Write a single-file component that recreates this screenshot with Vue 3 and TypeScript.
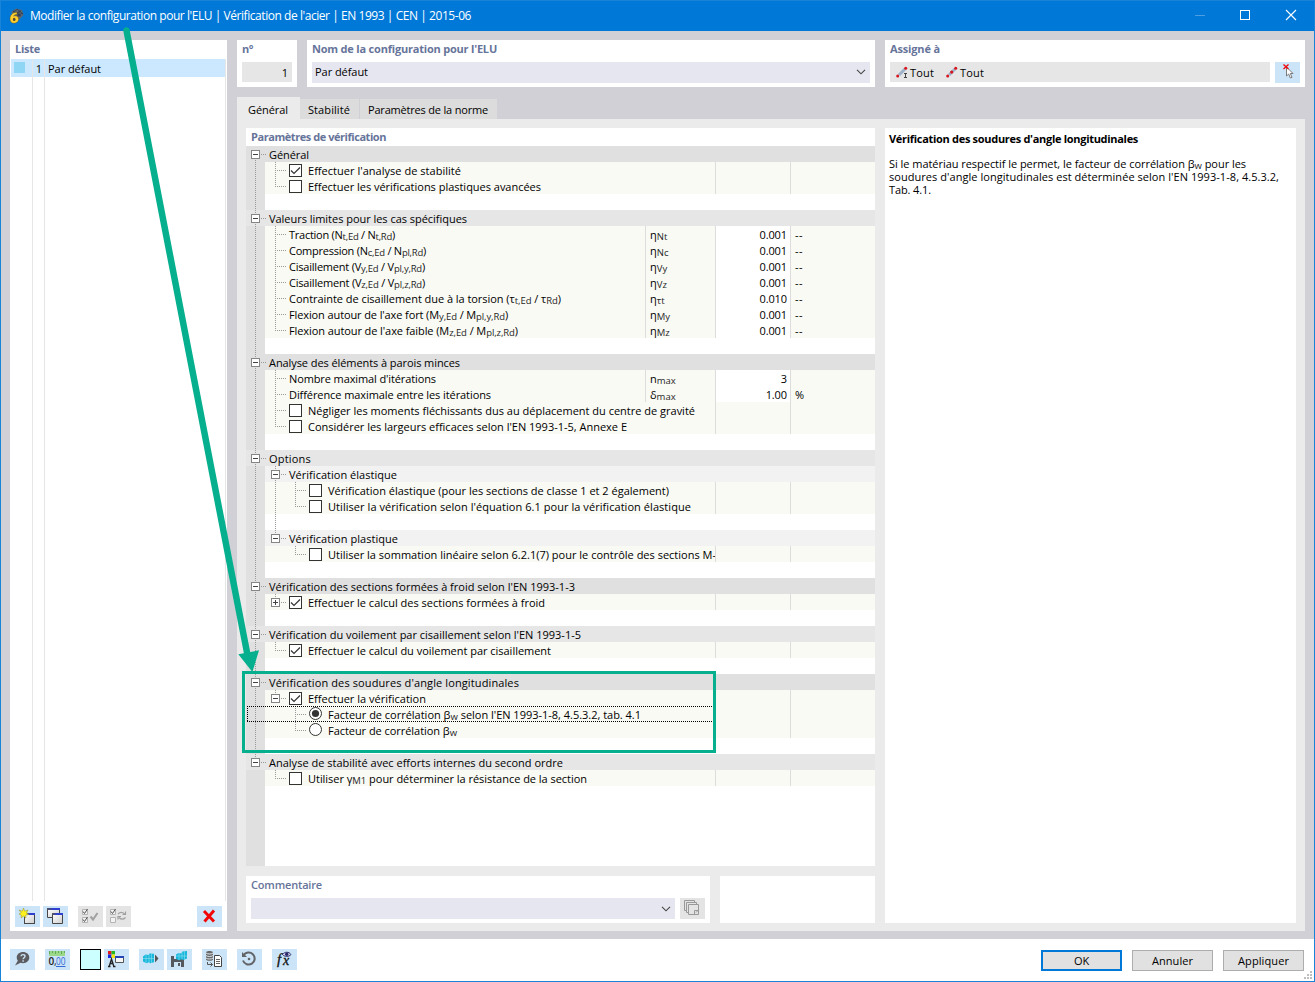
<script setup lang="ts">
import type { Directive } from 'vue'

type Seg = { t: string; sub: boolean }
type Kind = 'head' | 'subhead' | 'item' | 'blank'
interface Row {
  kind: Kind
  text?: string
  w?: number
  alt?: boolean
  /** connector drawn at the first and second nesting level */
  c1?: string
  c2?: string
  check?: boolean
  radio?: boolean
  sym?: string
  val?: string
  unit?: string
  focus?: boolean
}

/* Spreads letters so that a label takes the given width in pixels. */
const fit = (el: HTMLElement, width?: number) => {
  if (!width) return
  el.style.letterSpacing = '0px'
  const n = (el.textContent ?? '').length
  if (n > 1) el.style.letterSpacing = `${(width - el.getBoundingClientRect().width) / n}px`
}
const vFit: Directive<HTMLElement, number | undefined> = {
  mounted: (el, b) => fit(el, b.value),
}

const parse = (s = ''): Seg[] =>
  s.split(/(_\{[^}]*\})/).filter(Boolean).map((p) =>
    p.startsWith('_{') ? { t: p.slice(2, -1), sub: true } : { t: p, sub: false })

const rows: Row[] = [
  { kind: 'head', text: 'Général', w: 40 },
  { kind: 'item', c1: 't', check: true, text: "Effectuer l'analyse de stabilité", w: 153 },
  { kind: 'item', c1: 'l', check: false, text: 'Effectuer les vérifications plastiques avancées', w: 233 },
  { kind: 'blank' },
  { kind: 'head', alt: true, text: 'Valeurs limites pour les cas spécifiques', w: 198 },
  { kind: 'item', c1: 't', text: 'Traction (N_{t,Ed} / N_{t,Rd})', w: 106, sym: 'η_{Nt}', val: '0.001', unit: '--' },
  { kind: 'item', c1: 't', text: 'Compression (N_{c,Ed} / N_{pl,Rd})', w: 137, sym: 'η_{Nc}', val: '0.001', unit: '--' },
  { kind: 'item', c1: 't', text: 'Cisaillement (V_{y,Ed} / V_{pl,y,Rd})', w: 136, sym: 'η_{Vy}', val: '0.001', unit: '--' },
  { kind: 'item', c1: 't', text: 'Cisaillement (V_{z,Ed} / V_{pl,z,Rd})', w: 136, sym: 'η_{Vz}', val: '0.001', unit: '--' },
  { kind: 'item', c1: 't', text: 'Contrainte de cisaillement due à la torsion (τ_{t,Ed} / τ_{Rd})', w: 272, sym: 'η_{τt}', val: '0.010', unit: '--' },
  { kind: 'item', c1: 't', text: "Flexion autour de l'axe fort (M_{y,Ed} / M_{pl,y,Rd})", w: 219, sym: 'η_{My}', val: '0.001', unit: '--' },
  { kind: 'item', c1: 'l', text: "Flexion autour de l'axe faible (M_{z,Ed} / M_{pl,z,Rd})", w: 229, sym: 'η_{Mz}', val: '0.001', unit: '--' },
  { kind: 'blank' },
  { kind: 'head', text: 'Analyse des éléments à parois minces', w: 191 },
  { kind: 'item', c1: 't', text: "Nombre maximal d'itérations", w: 147, sym: 'n_{max}', val: '3', unit: '' },
  { kind: 'item', c1: 't', text: 'Différence maximale entre les itérations', w: 202, sym: 'δ_{max}', val: '1.00', unit: '%' },
  { kind: 'item', c1: 't', check: false, text: 'Négliger les moments fléchissants dus au déplacement du centre de gravité', w: 387 },
  { kind: 'item', c1: 'l', check: false, text: "Considérer les largeurs efficaces selon l'EN 1993-1-5, Annexe E", w: 319 },
  { kind: 'blank' },
  { kind: 'head', alt: true, text: 'Options', w: 42 },
  { kind: 'subhead', c1: 'm', text: 'Vérification élastique', w: 108 },
  { kind: 'item', c1: 'i', c2: 't', check: false, text: 'Vérification élastique (pour les sections de classe 1 et 2 également)', w: 341 },
  { kind: 'item', c1: 'i', c2: 'l', check: false, text: "Utiliser la vérification selon l'équation 6.1 pour la vérification élastique", w: 363 },
  { kind: 'blank', c1: 'i' },
  { kind: 'subhead', c1: 'e', text: 'Vérification plastique', w: 109 },
  { kind: 'item', c2: 'l', check: false, text: 'Utiliser la sommation linéaire selon 6.2.1(7) pour le contrôle des sections M-', w: 388 },
  { kind: 'blank' },
  { kind: 'head', text: "Vérification des sections formées à froid selon l'EN 1993-1-3", w: 306 },
  { kind: 'item', c1: 'p', check: true, text: 'Effectuer le calcul des sections formées à froid', w: 237 },
  { kind: 'blank' },
  { kind: 'head', alt: true, text: "Vérification du voilement par cisaillement selon l'EN 1993-1-5", w: 312 },
  { kind: 'item', c1: 'l', check: true, text: 'Effectuer le calcul du voilement par cisaillement', w: 243 },
  { kind: 'blank' },
  { kind: 'head', text: "Vérification des soudures d'angle longitudinales", w: 250 },
  { kind: 'item', c1: 'e', check: true, text: 'Effectuer la vérification', w: 118 },
  { kind: 'item', c2: 't', radio: true, focus: true, text: "Facteur de corrélation β_{w} selon l'EN 1993-1-8, 4.5.3.2, tab. 4.1", w: 313 },
  { kind: 'item', c2: 'l', radio: false, text: 'Facteur de corrélation β_{w}', w: 129 },
  { kind: 'blank' },
  { kind: 'head', alt: true, text: 'Analyse de stabilité avec efforts internes du second ordre', w: 294 },
  { kind: 'item', c1: 'l', check: false, text: 'Utiliser γ_{M1} pour déterminer la résistance de la section', w: 279 },
]
const lastHead = rows.map((r) => r.kind).lastIndexOf('head')

/* Vertical and horizontal dotted strokes of the tree for one row. */
const lines = (r: Row, i: number): string => {
  let d = ''
  if (i === 0) d += 'M9.5 14V16'
  else if (i < lastHead) d += r.kind === 'head' ? 'M9.5 0V4M9.5 14V16' : 'M9.5 0V16'
  else if (i === lastHead) d += 'M9.5 0V4'
  if (r.kind === 'head') d += 'M15 8.5H20'
  const level = (c: string | undefined, x: number) => {
    if (!c) return
    if (c === 't' || c === 'i') d += `M${x} 0V16`
    if (c === 'l') d += `M${x} 0V8`
    if (c === 't' || c === 'l') d += `M${x - 0.5} 8.5H${x + 11}`
    if (c === 'm' || c === 'e' || c === 'p') d += `M${x} 0V4M${x + 5.5} 8.5H${x + 11}`
    if (c === 'm') d += `M${x} 14V16`
  }
  level(r.c1, 29.5)
  level(r.c2, 49.5)
  return d
}
const boxX = (r: Row): number | null =>
  r.kind === 'head' ? 5 : r.c1 && 'mep'.includes(r.c1) ? 25 : null
const hasMark = (r: Row) => r.check !== undefined || r.radio !== undefined
const labelClass = (r: Row) => {
  if (r.kind === 'head') return 'at0'
  if (hasMark(r)) return r.c2 ? 'at3' : 'at2'
  return 'at1'
}
</script>

<template>
  <div class="window">
    <header class="titlebar">
      <svg class="logo" width="16" height="16" viewBox="0 0 16 16">
        <path d="M3 4 8 0.5 14 2 15.5 7 11 12 7 8Z" fill="#5b6774" />
        <path d="M5 4 9 1.5M7 6 13 2.5M9 8 15 5M5 3 13 8M9 1 15 6M11 9V4" stroke="#25303c" stroke-width=".6" />
        <path d="M9 4.200C4.800 4.200 2 7 2 10.900c0 2.700 1.600 4.300 4.200 4.300s4.400-1.600 4.400-3.900c0-2.200-1.400-3.500-3.600-3.500-.5 0-1 .1-1.500.4.700-1.200 1.900-1.800 3.500-1.800Z" fill="#ffd02c" stroke="#604a12" stroke-width=".4" />
        <ellipse cx="6.200" cy="11.400" rx="1.300" ry="1.600" fill="#514a38" />
      </svg>
      <span v-fit="441" class="caption">Modifier la configuration pour l'ELU | Vérification de l'acier | EN 1993 | CEN | 2015-06</span>
      <svg class="winbtns" width="138" height="30" viewBox="0 0 138 30" fill="none">
        <path d="M18 14.500h10" stroke="#4d9fe2" />
        <rect x="63.500" y="9.500" width="9" height="9" stroke="#fff" />
        <path d="m109 9 10 10m0-10-10 10" stroke="#fff" stroke-width="1.100" />
      </svg>
    </header>

    <main class="body">
      <section class="list">
        <h2><span v-fit="25">Liste</span></h2>
        <div class="listrows">
          <div class="listrow">
            <span class="c-color"><i /></span>
            <span class="c-num">1</span>
            <span class="c-name"><span v-fit="53">Par défaut</span></span>
          </div>
          <div class="listfill"><span class="c-color" /><span class="c-num" /><span class="c-name" /></div>
        </div>
        <div class="listtools">
          <button class="tool">
            <svg width="25" height="21" viewBox="0 0 25 21">
              <defs>
                <linearGradient id="bar"><stop offset="0" stop-color="#555" /><stop offset=".5" stop-color="#2f3fd0" /><stop offset="1" stop-color="#2f3fd0" /></linearGradient>
                <linearGradient id="pane" x2="1" y2="1"><stop offset="0" stop-color="#fff" /><stop offset="1" stop-color="#cfcfcf" /></linearGradient>
              </defs>
              <rect x="9.500" y="7.500" width="10" height="10" fill="url(#pane)" stroke="#474747" />
              <path d="M9 7h11v2H9z" fill="url(#bar)" />
              <path d="m8.500 2 1.200 3.200L13 4l-1.500 3 2.500 1.500-3.300.6.300 3-2.500-2L6 12l.3-3L4 8l2.200-1.300L4 4l3.300 1.200Z" fill="#fff21c" stroke="#8b8c32" stroke-width=".5" />
            </svg>
          </button>
          <button class="tool g3">
            <svg width="25" height="21" viewBox="0 0 25 21">
              <path d="M4.500 2.500h12v9h-12z" fill="url(#pane)" stroke="#474747" /><path d="M4 2h13v2H4z" fill="url(#bar)" />
              <path d="M9.500 7.500h10v10h-10z" fill="url(#pane)" stroke="#474747" /><path d="M9 7h11v2H9z" fill="url(#bar)" />
            </svg>
          </button>
          <button class="tool off g10">
            <svg width="25" height="21" viewBox="0 0 25 21" fill="none">
              <path d="M4.500 3.500h5v5h-5zM4.500 11.500h5v5h-5z" stroke="#b4b4b4" fill="#f2f2f2" />
              <path d="m5 5.500 1.500 2 3-4.500M5 13.500l1.500 2 3-4.500" stroke="#555" />
              <path d="m12.500 10.500 2.500 3 4.500-6.500" stroke="#a0a0a0" stroke-width="2" />
            </svg>
          </button>
          <button class="tool off g3">
            <svg width="25" height="21" viewBox="0 0 25 21" fill="none">
              <path d="M4.500 3.500h5v5h-5zM4.500 11.500h5v5h-5z" stroke="#b4b4b4" fill="#f2f2f2" />
              <path d="m5 5.500 1.500 2 3-4.500" stroke="#555" />
              <path d="M12 8c2-2 4.500-2 6.500 0M19.500 5.500v3h-3M19.500 11.500c-2 2-4.500 2-6.500 0M12 13.500v-3h3" stroke="#a0a0a0" stroke-width="1.200" />
            </svg>
          </button>
          <button class="tool del">
            <svg width="25" height="21" viewBox="0 0 25 21" fill="none">
              <path d="m7 5 10 10.500M17 4.500 7.500 15.500" stroke="#f20505" stroke-width="2.900" />
            </svg>
          </button>
        </div>
      </section>

      <div class="right">
        <div class="top">
          <section class="card num"><h2><span v-fit="11">n°</span></h2><div class="field gray end">1</div></section>
          <section class="card name">
            <h2><span v-fit="185">Nom de la configuration pour l'ELU</span></h2>
            <div class="field combo"><span v-fit="53">Par défaut</span>
              <svg width="10" height="6" viewBox="0 0 10 6" fill="none"><path d="m1 .8 4 4 4-4" stroke="#444" stroke-width="1.100" /></svg>
            </div>
          </section>
          <section class="card assign">
            <h2><span v-fit="50">Assigné à</span></h2>
            <div class="line">
              <div class="field gray members">
                <svg width="14" height="14" viewBox="0 0 14 14">
                  <path d="M3 9 9 3" stroke="#9fb3cb" stroke-width="3" /><circle cx="1.700" cy="10" r="1.500" fill="#d8141c" /><circle cx="9.700" cy="2.200" r="1.500" fill="#d8141c" />
                  <path d="M8 7.500h3M9.500 7.500v4M8 11.500h3" stroke="#444" />
                </svg>
                <span v-fit="24">Tout</span>
                <svg class="set" width="14" height="14" viewBox="0 0 14 14">
                  <path d="M3 9 9 3" stroke="#9fb3cb" stroke-width="3" /><circle cx="1.700" cy="10" r="1.500" fill="#d8141c" /><circle cx="5.700" cy="6.100" r="1.600" fill="#d8141c" /><circle cx="9.700" cy="2.200" r="1.500" fill="#d8141c" />
                </svg>
                <span v-fit="24">Tout</span>
              </div>
              <button class="tool">
                <svg width="25" height="21" viewBox="0 0 25 21">
                  <path d="M11.500 5v9l2.200-2 1.600 4 1.700-.7-1.700-3.800H18Z" fill="#fff" stroke="#7b7b7b" />
                  <path d="m8.500 2.500 5 4.500m0-4.500-5 4.500" stroke="#f20505" stroke-width="1.300" />
                </svg>
              </button>
            </div>
          </section>
        </div>

        <nav class="tabs">
          <span class="tab on"><span v-fit="40">Général</span></span>
          <span class="tab t2"><span v-fit="42">Stabilité</span></span>
          <span class="tab t3"><span v-fit="120">Paramètres de la norme</span></span>
        </nav>

        <div class="content">
          <div class="left">
            <section class="params">
              <h2><span v-fit="135">Paramètres de vérification</span></h2>
              <div class="tree">
                <div v-for="(r, i) in rows" :key="i" class="row" :class="[r.kind, { alt: r.alt }]">
                  <div class="cell main">
                    <svg class="lines" width="78" height="16" viewBox="0 0 78 16" fill="none">
                      <path :d="lines(r, i)" stroke="#9a9a9a" stroke-dasharray="1 1" />
                      <g v-if="boxX(r) !== null" :transform="`translate(${boxX(r)} 4)`">
                        <rect x=".5" y=".5" width="8" height="8" fill="#fff" stroke="#858585" />
                        <path :d="r.c1 === 'p' ? 'M2 4.500h5M4.500 2v5' : 'M2 4.500h5'" stroke="#444" />
                      </g>
                      <g v-if="hasMark(r)" :transform="`translate(${r.c2 ? 63 : 43} ${r.radio === undefined ? 2 : 1})`">
                        <template v-if="r.radio !== undefined">
                          <circle cx="6.500" cy="6.500" r="6" fill="#fff" stroke="#333" />
                          <circle v-if="r.radio" cx="6.500" cy="6.500" r="3.600" fill="#333" />
                        </template>
                        <template v-else>
                          <rect x=".5" y=".5" width="12" height="12" fill="#fff" stroke="#333" />
                          <path v-if="r.check" d="m2 6.500 3 3 6-6" stroke="#333" stroke-width="1.200" />
                        </template>
                      </g>
                    </svg>
                    <span v-if="r.text" v-fit="r.w" class="label" :class="labelClass(r)"><template v-for="(s, k) in parse(r.text)" :key="k"><sub v-if="s.sub">{{ s.t }}</sub><template v-else>{{ s.t }}</template></template></span>
                  </div>
                  <template v-if="r.kind === 'item'">
                    <div v-if="r.sym" class="cell sym"><span><template v-for="(s, k) in parse(r.sym)" :key="k"><sub v-if="s.sub">{{ s.t }}</sub><template v-else>{{ s.t }}</template></template></span></div>
                    <div class="cell val" :class="{ edit: r.sym }">{{ r.val }}</div>
                    <div class="cell unit">{{ r.unit }}</div>
                  </template>
                  <svg v-if="r.focus" class="focus" width="468" height="16" viewBox="0 0 468 16" fill="none">
                    <path d="M0 .5H468M0 15.500H468M.5 0V16M467.500 0V16" stroke="#000" stroke-dasharray="1 1" />
                  </svg>
                </div>
                <div class="gutter" />
              </div>
            </section>
            <div class="bottom">
              <section class="comment">
                <h2><span v-fit="71">Commentaire</span></h2>
                <div class="line">
                  <div class="field combo">
                    <span />
                    <svg width="10" height="6" viewBox="0 0 10 6" fill="none"><path d="m1 .8 4 4 4-4" stroke="#444" stroke-width="1.100" /></svg>
                  </div>
                  <button class="tool off">
                    <svg width="25" height="21" viewBox="0 0 25 21" fill="none" stroke="#999">
                      <path d="M6.500 12.500h-2v-10h10v2M8.500 14.500h-2v-10h10v2M8.500 6.500h10v10h-10zM14.500 16v-3.500H18M16 14.500l1.500-1.500" />
                    </svg>
                  </button>
                </div>
              </section>
              <section class="empty" />
            </div>
          </div>
          <aside class="help">
            <h3><span v-fit="249">Vérification des soudures d'angle longitudinales</span></h3>
            <p>
              <span v-fit="357">Si le matériau respectif le permet, le facteur de corrélation β<sub>w</sub> pour les</span><br>
              <span v-fit="390">soudures d'angle longitudinales est déterminée selon l'EN 1993-1-8, 4.5.3.2,</span><br>
              <span v-fit="42">Tab. 4.1.</span>
            </p>
          </aside>
        </div>
      </div>
    </main>

    <footer class="footer">
      <button class="tool">
        <svg width="25" height="21" viewBox="0 0 25 21">
          <path d="M13 3c3.600 0 6.300 2.400 6.300 5.600s-2.700 5.600-6.300 5.600c-.9 0-1.700-.1-2.400-.4L5 16.500l2.800-4.700C7.100 10.900 6.700 9.800 6.700 8.600 6.700 5.400 9.400 3 13 3Z" fill="#5c5c60" />
          <path d="M11 7.300c.2-2.300 4-2.200 4 0 0 1.400-1.900 1.400-1.900 3M13.100 11.300v1.400" stroke="#cce4f7" stroke-width="1.400" fill="none" />
        </svg>
      </button>
      <button class="tool g10">
        <svg width="25" height="21" viewBox="0 0 25 21">
          <rect x="4" y="2" width="16" height="5" fill="#9bd88a" /><path d="M4.500 2v3M7.500 2v2M10.500 2v3M13.500 2v2M16.500 2v3M19.500 2v2" stroke="#62ac58" />
          <text x="3.500" y="15.500" font-size="10" font-weight="600" fill="#222">0</text><text x="9" y="15.500" font-size="10" fill="#222">,</text><text x="11" y="15.500" font-size="10" fill="#3569d4" textLength="9.500" lengthAdjust="spacingAndGlyphs">00</text>
          <path d="M11 17.500h9.500" stroke="#3569d4" />
        </svg>
      </button>
      <button class="swatch g10" />
      <button class="tool g3">
        <svg width="25" height="21" viewBox="0 0 25 21">
          <path d="M4 2h3.500v3.500H4z" fill="#e01818" /><path d="M7.500 2H11v3.500H7.500z" fill="#22b622" /><path d="M4 5.500h3.500V9H4z" fill="#1727e0" /><path d="M7.500 5.500H11V9H7.500z" fill="#f2e30e" />
          <path d="m5 18 2.500-8 2.500 8M6 14.500h3.500M4 17.500h2.500M9 17.500h2.500" stroke="#222" stroke-width="1.300" fill="none" />
          <path d="M11.500 7.500h8v6h-8z" fill="#f5f5f5" stroke="#555" /><path d="M11 7h9v2h-9z" fill="#2444b8" />
        </svg>
      </button>
      <button class="tool g10">
        <svg width="25" height="21" viewBox="0 0 25 21">
          <path d="m4 7.500 2.500-2 3 .5 1-1.500 4.500.3v8.500l-4 1-1-1-2.500 1L4 12.500Z" fill="#18b8dc" /><path d="M4 9.500h11M7 6v8M10 5v9M12.500 5v9" stroke="#a5e4f2" stroke-width=".5" />
          <path d="m16 5.500 3.500 4-3.500 4Z" fill="#555" />
        </svg>
      </button>
      <button class="tool g3">
        <svg width="25" height="21" viewBox="0 0 25 21">
          <path d="M4 7h12l1 2v9H4z" fill="#55595d" /><path d="M7 13h7v5H7zM7 7h6v3H7z" fill="#cce4f7" /><path d="M11 14h2v3h-2z" fill="#55595d" />
          <path d="m9 5.500 2.500-1.500 2.500.5L15.500 2.500 20 2v7.500L16.500 11l-2-.7-2.500 1L9 10Z" fill="#18b8dc" /><path d="M9 7h11M12 4v7M15 3v7.500M17.500 2.500v8" stroke="#a5e4f2" stroke-width=".5" />
        </svg>
      </button>
      <button class="tool g10">
        <svg width="25" height="21" viewBox="0 0 25 21" fill="none">
          <path d="M4 3.500c0-2 7-2 7 0v7c0 1.700-7 1.700-7 0Z" fill="#686868" /><path d="M4 4c1 1.300 6 1.300 7 0M4 6.500C5 7.800 10 7.800 11 6.500M4 9c1 1.300 6 1.300 7 0" stroke="#e4edf4" />
          <path d="M5.500 13v2.500h5m-2-2 2 2-2 2" stroke="#555" />
          <path d="M12.500 6.500h5l2 2v9h-7z" fill="#fff" stroke="#444" /><path d="M14 10.500h4M14 12.500h4M14 14.500h4" stroke="#666" />
        </svg>
      </button>
      <button class="tool g10">
        <svg width="25" height="21" viewBox="0 0 25 21" fill="none">
          <path d="M6.500 6.500A6 6 0 1 1 6 11.500" stroke="#626468" stroke-width="2" /><path d="M5 3v5h5Z" fill="#626468" /><circle cx="12" cy="10" r="1.300" fill="#626468" />
        </svg>
      </button>
      <button class="tool g10">
        <svg width="25" height="21" viewBox="0 0 25 21" fill="none">
          <text class="fx" x="5" y="15" font-size="15">f</text><text class="fx" x="11" y="16" font-size="14">x</text>
          <path d="M10.500 5.500c2-3 6.500-3 8.500 0-2 2.500-6.500 2.500-8.500 0Z" fill="#d9dcf4" stroke="#292767" /><circle cx="14.700" cy="5.300" r="1.700" fill="#292767" />
        </svg>
      </button>
      <div class="actions">
        <button class="btn ok"><span v-fit="15">OK</span></button>
        <button class="btn"><span v-fit="41">Annuler</span></button>
        <button class="btn"><span v-fit="51">Appliquer</span></button>
      </div>
      <svg class="grip" width="8" height="8" viewBox="0 0 8 8" fill="#bfbfbf"><path d="M6 0h2v2H6zM3 3h2v2H3zM6 3h2v2H6zM0 6h2v2H0zM3 6h2v2H3zM6 6h2v2H6z" /></svg>
    </footer>

    <svg class="callout" width="1315" height="982" viewBox="0 0 1315 982" fill="none">
      <path d="M126.500 30.500 247.500 655" stroke="#06b08f" stroke-width="6.500" stroke-linecap="round" />
      <path d="m238.300 654.300 20.700-4L252.400 672Z" fill="#06b08f" />
      <rect x="243.500" y="672.500" width="471" height="79" stroke="#06b08f" stroke-width="3" />
    </svg>
  </div>
</template>

<style>
html, body { margin: 0; overflow: hidden; background: #fff; }
</style>

<style scoped>
* { box-sizing: border-box; }
.window {
  position: relative; display: flex; flex-direction: column; width: 1315px; height: 982px;
  border: 1px solid #1883d7; background: #fff; color: #000;
  font: 11px/16px "Open Sans", "Noto Sans", sans-serif; white-space: nowrap; overflow: hidden;
}
button { padding: 0; border: 0; font: inherit; color: inherit; }
svg { display: block; flex: none; }
h2 { margin: 0; font-size: 11px; line-height: 18px; font-weight: 700; color: #66749a; padding-left: 5px; height: 18px; }
sub { font-size: 9.5px; vertical-align: -1px; line-height: 0; color: #262626; }

.titlebar { display: flex; align-items: center; height: 30px; flex: none; background: #0078d7; color: #fff; font-size: 12px; }
.logo { margin-left: 7px; }
.caption { margin-left: 6px; }
.winbtns { margin-left: auto; margin-right: -1px; }

.body { display: flex; gap: 10px; height: 908px; flex: none; padding: 9px 9px 8px; background: #d0d0d6; }
.list { width: 217px; display: flex; flex-direction: column; background: #fff; }
.list h2 { height: 19px; }
.listrows { flex: 1; display: flex; flex-direction: column; margin: 0 1px; border-right: 1px solid #e6e6e6; }
.listrow, .listfill { display: flex; }
.listrow { height: 18px; line-height: 19px; background: #cce8ff; }
.listfill { flex: 1; }
.c-color { width: 22px; border-right: 1px solid #e6e6e6; padding: 3px; }
.c-color i { display: block; width: 11px; height: 11px; background: #8fd6f5; }
.c-num { width: 12px; border-right: 1px solid #e6e6e6; text-align: right; padding-right: 2px; }
.c-name { padding-left: 3px; }
.listtools { display: flex; height: 30px; flex: none; padding: 5px 5px 0; }
.tool { width: 25px; height: 21px; flex: none; background: #cce4f7; }
.off { background: #e4e4e4; }
.g3 { margin-left: 3px; }
.g10 { margin-left: 10px; }
.del { margin-left: auto; }

.right { width: 1068px; display: flex; flex-direction: column; }
.top { display: flex; gap: 10px; height: 47px; flex: none; }
.card { background: #fff; }
.card h2 { height: 22px; }
.num { width: 60px; }
.num .field { margin: 0 5px; }
.name { width: 568px; }
.name .field { margin: 0 5px; padding: 0 4px 1px 3px; }
.assign { width: 420px; }
.line { display: flex; gap: 5px; padding: 0 5px; }
.line .field { flex: 1; }
.field { height: 21px; display: flex; align-items: center; padding: 0 4px; background: #e6e6f1; }
.gray { background: #e6e6e6; height: 20px; padding-top: 2px; }
.end { justify-content: flex-end; }
.combo { justify-content: space-between; }
.members { padding-left: 6px; }
.set { margin-left: 12px; }

.tabs { display: flex; align-items: flex-end; height: 33px; flex: none; margin-bottom: -1px; }
.tab { height: 21px; line-height: 22px; background: #dcdcdc; padding-left: 8px; }
.on { width: 63px; height: 23px; line-height: 26px; background: #ebebeb; padding-left: 11px; }
.t2 { width: 60px; border-right: 1px solid #d0d0d4; }
.t3 { width: 137px; }
.content { flex: 1; display: flex; gap: 10px; padding: 9px 9px 8px; background: #ebebeb; }
.left { width: 629px; display: flex; flex-direction: column; gap: 10px; }
.params { height: 738px; display: flex; flex-direction: column; background: #fff; }
.params h2 { flex: none; }
.tree { flex: 1; display: flex; flex-direction: column; }
.row { position: relative; display: flex; height: 16px; flex: none; background: linear-gradient(90deg, #e0e0e0 19px, #f9faf4 19px); }
.head { background: #e0e0e0; }
.head.alt { background: #e6e6e6; }
.subhead { background: linear-gradient(90deg, #e0e0e0 19px, #f2f2f2 19px); }
.blank { background: linear-gradient(90deg, #e0e0e0 19px, #fff 19px); }
.gutter { flex: 1; width: 19px; background: #e0e0e0; }
.cell { line-height: 18px; height: 16px; }
.main { flex: 1; min-width: 0; display: flex; overflow: hidden; }
.lines { margin-right: -78px; }
.label { flex: none; }
.at0 { margin-left: 23px; }
.at1 { margin-left: 43px; }
.at2 { margin-left: 62px; }
.at3 { margin-left: 82px; }
.sym { width: 70px; border-left: 1px solid #dcdcdc; padding-left: 4px; }
.val { width: 75px; border-left: 1px solid #dcdcdc; padding-right: 3px; text-align: right; letter-spacing: -.1px; }
.edit { background: #fff; }
.unit { width: 85px; border-left: 1px solid #dcdcdc; padding-left: 4px; letter-spacing: .4px; }
.focus { position: absolute; left: 1px; top: 0; }
.bottom { display: flex; gap: 10px; height: 47px; }
.comment { width: 464px; background: #fff; }
.comment h2 { height: 22px; font-weight: 600; }
.empty { flex: 1; background: #fff; }
.help { flex: 1; background: #fff; padding: 3px 4px 0; }
.help h3 { margin: 0; font-size: 11px; line-height: 15px; font-weight: 700; }
.help p { margin: 11px 0 0; line-height: 13px; }

.footer { position: relative; flex: 1; display: flex; padding: 10px 10px 0 9px; background: #fff; }
.footer text { font-family: "Open Sans", sans-serif; }
.footer text.fx { font-family: "Liberation Serif", serif; font-style: italic; fill: #111; stroke: #111; stroke-width: .3px; }
.swatch { width: 21px; height: 21px; border: 1px solid #000; background: #ccffff; }
.footer .swatch { border: 1px solid #000; }
.actions { display: flex; gap: 10px; margin: 1px 0 0 auto; height: 21px; }
.btn { width: 81px; height: 21px; border: 1px solid #adadad; background: #e1e1e1; line-height: 19px; }
.ok { border: 2px solid #0078d7; line-height: 17px; }
.grip { position: absolute; right: 2px; bottom: 2px; }
.callout { position: absolute; left: -1px; top: -1px; pointer-events: none; }
</style>
